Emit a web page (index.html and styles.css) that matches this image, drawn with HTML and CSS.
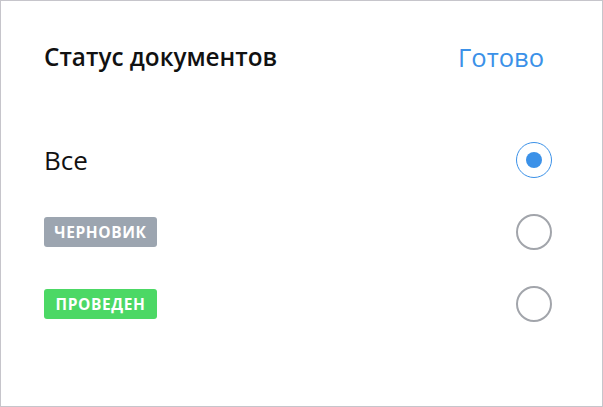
FILE: index.html
```html
<!DOCTYPE html>
<html lang="ru">
<head>
  <meta charset="UTF-8">
  <title>Статус документов</title>
  <link rel="stylesheet" href="styles.css">
</head>
<body>
  <div class="sheet">
    <div class="header">
      <h2 class="title">Статус документов</h2>
      <a class="done" href="#">Готово</a>
    </div>

    <ul class="options">
      <li class="option">
        <span class="label">Все</span>
        <span class="radio checked"></span>
      </li>
      <li class="option">
        <span class="badge badge-draft">ЧЕРНОВИК</span>
        <span class="radio"></span>
      </li>
      <li class="option">
        <span class="badge badge-posted">ПРОВЕДЕН</span>
        <span class="radio"></span>
      </li>
    </ul>
  </div>
</body>
</html>
```

FILE: styles.css
```css
body {
  margin: 0;
  font-family: "Open Sans", Lato, sans-serif;
  color: #111;
  background: #fff;
}
.sheet {
  box-sizing: border-box;
  width: 603px;
  height: 407px;
  border: 1px solid #c6c5cb;
  padding: 0 50px 0 43px;
}
.header {
  box-sizing: border-box;
  display: flex;
  justify-content: space-between;
  align-items: flex-start;
  height: 123px;
  padding-top: 42px;
}
.title {
  margin: 0;
  font-size: 24.3px;
  line-height: 28px;
  font-weight: 600;
}
.done {
  color: #3b91e8;
  font-size: 25.5px;
  line-height: 28px;
  text-decoration: none;
  margin-right: 8px;
}
.options {
  list-style: none;
  margin: 0;
  padding: 0;
}
.option {
  display: flex;
  justify-content: space-between;
  align-items: center;
  height: 72px;
}
.label {
  font-size: 26px;
}
.badge {
  display: inline-block;
  width: 113px;
  line-height: 30px;
  text-align: center;
  color: #fff;
  font-size: 15.5px;
  font-weight: 700;
  letter-spacing: 0.6px;
  border-radius: 3px;
}
.badge-draft { background-color: #9ca5b0; }
.badge-posted { background-color: #4cd865; }
.radio {
  box-sizing: border-box;
  width: 36px;
  height: 36px;
  border: 2.5px solid #a2a5ab;
  border-radius: 50%;
  display: flex;
  align-items: center;
  justify-content: center;
}
.radio.checked {
  border: 1.5px solid #3b91e8;
}
.radio.checked::after {
  content: "";
  width: 16px;
  height: 16px;
  border-radius: 50%;
  background: #3b91e8;
}
```
